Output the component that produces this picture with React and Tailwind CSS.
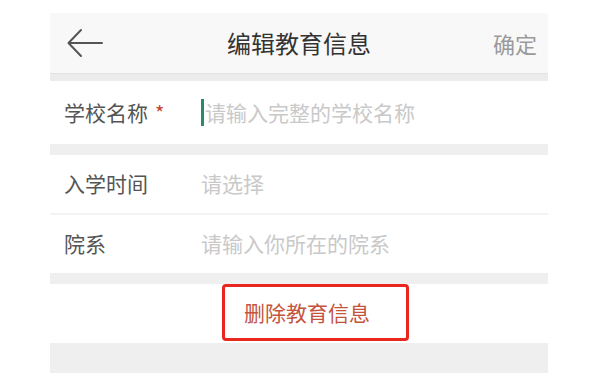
import React from 'react';

const font = { fontFamily: '"Noto Sans CJK SC", "Noto Sans", sans-serif' };

const BackArrow = () => (
  <svg className="w-[37px] h-[30px]" viewBox="0 0 37 30" fill="none" stroke="#555" strokeWidth="2" strokeLinecap="round" strokeLinejoin="round">
    <path d="M35 15H2" />
    <path d="M14 2L1.5 15L14 28" />
  </svg>
);

const FormRow = ({ label, required, placeholder, cursor }) => (
  <div className="flex items-center h-full pl-[14px]">
    <div className="w-[137px] flex items-center text-[21px] text-[#555]">
      {label}
      {required && <span className="ml-[7px] text-[20px] leading-none text-[#c4432f]">*</span>}
    </div>
    <div className="flex items-center text-[21px] text-[#c9c9c9]">
      {cursor && <span className="w-[3px] h-[27px] bg-[#2a8a6c] mr-[1px]"></span>}
      {placeholder}
    </div>
  </div>
);

const App = () => {
  return (
    <div className="w-[598px] h-[384px] bg-white pt-[13px]" style={font}>
      <div className="ml-[50px] w-[498px]">
        {/* header */}
        <div className="h-[60px] bg-[#f8f8f8] grid grid-cols-[1fr_auto_1fr] items-center">
          <div className="pl-[17px] flex items-center">
            <BackArrow />
          </div>
          <div className="text-[24px] text-[#333]">编辑教育信息</div>
          <div className="flex justify-end pr-[11px] text-[22px] text-[#9a9a9a]">确定</div>
        </div>
        <div className="h-[8px] bg-[#ececec] border-t border-[#e2e2e2]"></div>

        <div className="h-[63px] bg-white">
          <FormRow label="学校名称" required placeholder="请输入完整的学校名称" cursor />
        </div>
        <div className="h-[11px] bg-[#efefef]"></div>

        <div className="h-[58px] bg-white">
          <FormRow label="入学时间" placeholder="请选择" />
        </div>
        <div className="h-[2px] bg-[#f3f3f3]"></div>
        <div className="h-[58px] bg-white">
          <FormRow label="院系" placeholder="请输入你所在的院系" />
        </div>
        <div className="h-[11px] bg-[#efefef]"></div>

        <div className="h-[59px] bg-white flex items-start">
          <button className="ml-[172px] w-[187px] h-[57px] border-[3px] border-[#e8281e] rounded-[4px] pl-[19px] text-[21px] text-[#c4533d] flex items-center justify-start">
            删除教育信息
          </button>
        </div>
        <div className="h-[30px] bg-[#efefef]"></div>
      </div>
    </div>
  );
};

export default App;
